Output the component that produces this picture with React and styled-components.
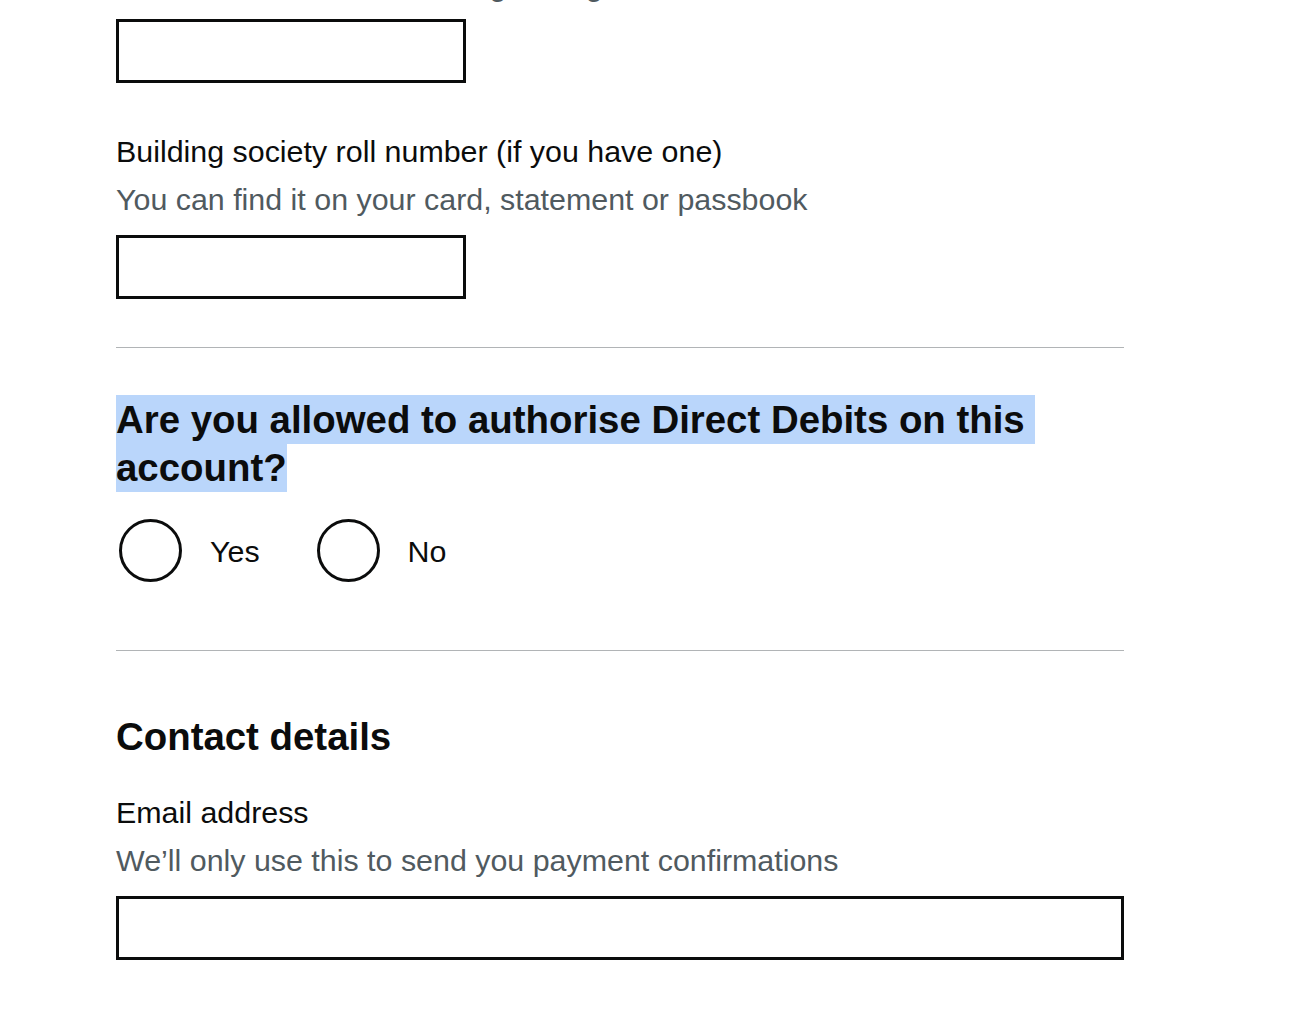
import React from "react";
import styled, { createGlobalStyle } from "styled-components";

const GlobalStyle = createGlobalStyle`
  html, body {
    margin: 0;
    padding: 0;
    background: #ffffff;
  }
  body {
    font-family: "Liberation Sans", Arial, Helvetica, sans-serif;
    color: #0b0c0c;
    overflow: hidden;
  }
  * { box-sizing: border-box; }
`;

const Page = styled.main`
  width: 1008px;
  margin: -83px 0 0 116px;
  padding: 0;
`;

const FormGroup = styled.div`
  margin: 0 0 ${(p) => p.$mb ?? 48}px 0;
`;

const Label = styled.label`
  display: block;
  font-size: 30.4px;
  line-height: 40px;
  font-weight: 400;
  color: #0b0c0c;
  margin-bottom: ${(p) => p.$mb ?? 8}px;
`;

const Hint = styled.div`
  font-size: 30.4px;
  line-height: 40px;
  color: #505a5f;
  margin-bottom: ${(p) => p.$mb ?? 16}px;
`;

const TextInput = styled.input`
  display: block;
  width: ${(p) => (p.$full ? "100%" : "350px")};
  height: 64px;
  margin: 0;
  padding: 8px;
  border: 3px solid #0b0c0c;
  border-radius: 0;
  background: #ffffff;
  font-family: inherit;
  font-size: 30.4px;
  outline: none;
  appearance: none;
`;

const SectionBreak = styled.hr`
  margin: 0;
  border: 0;
  height: 1px;
  background: #b1b4b6;
`;

const Question = styled.h2`
  margin: 48px 0 27px 0;
  font-size: 38.4px;
  line-height: 48px;
  font-weight: 700;
  color: #0b0c0c;
`;

const Selected = styled.span`
  background: #bad6fb;
  white-space: break-spaces;
  padding: 2.55px 0;
  -webkit-box-decoration-break: clone;
  box-decoration-break: clone;
`;

const RadioList = styled.div`
  display: flex;
  align-items: center;
  gap: 57px;
  padding-left: 3px;
  margin-bottom: 68px;
`;

const RadioItem = styled.div`
  display: flex;
  align-items: center;
`;

const RadioCircle = styled.input`
  appearance: none;
  -webkit-appearance: none;
  flex: none;
  width: 63px;
  height: 63px;
  margin: 0;
  border: 3px solid #0b0c0c;
  border-radius: 50%;
  background: #ffffff;
`;

const RadioLabel = styled.label`
  padding-left: 28px;
  font-size: 30.4px;
  line-height: 40px;
  color: #0b0c0c;
`;

const SectionHeading = styled.h2`
  margin: 62px 0 31px 0;
  font-size: 38.4px;
  line-height: 48px;
  font-weight: 700;
  color: #0b0c0c;
`;

export default function App() {
  return (
    <>
      <GlobalStyle />
      <Page>
        <FormGroup>
          <Label htmlFor="account-number">Account number</Label>
          <Hint $mb={14}>Must be between 6 and 8 digits long</Hint>
          <TextInput id="account-number" type="text" />
        </FormGroup>

        <FormGroup>
          <Label htmlFor="roll-number">Building society roll number (if you have one)</Label>
          <Hint>You can find it on your card, statement or passbook</Hint>
          <TextInput id="roll-number" type="text" />
        </FormGroup>

        <SectionBreak />

        <Question>
          <Selected>Are you allowed to authorise Direct Debits on this account?</Selected>
        </Question>
        <RadioList role="radiogroup">
          <RadioItem>
            <RadioCircle type="radio" id="auth-yes" name="authorise" />
            <RadioLabel htmlFor="auth-yes">Yes</RadioLabel>
          </RadioItem>
          <RadioItem>
            <RadioCircle type="radio" id="auth-no" name="authorise" />
            <RadioLabel htmlFor="auth-no">No</RadioLabel>
          </RadioItem>
        </RadioList>

        <SectionBreak />

        <SectionHeading>Contact details</SectionHeading>
        <FormGroup>
          <Label htmlFor="email">Email address</Label>
          <Hint>We’ll only use this to send you payment confirmations</Hint>
          <TextInput id="email" type="email" $full />
        </FormGroup>
      </Page>
    </>
  );
}
